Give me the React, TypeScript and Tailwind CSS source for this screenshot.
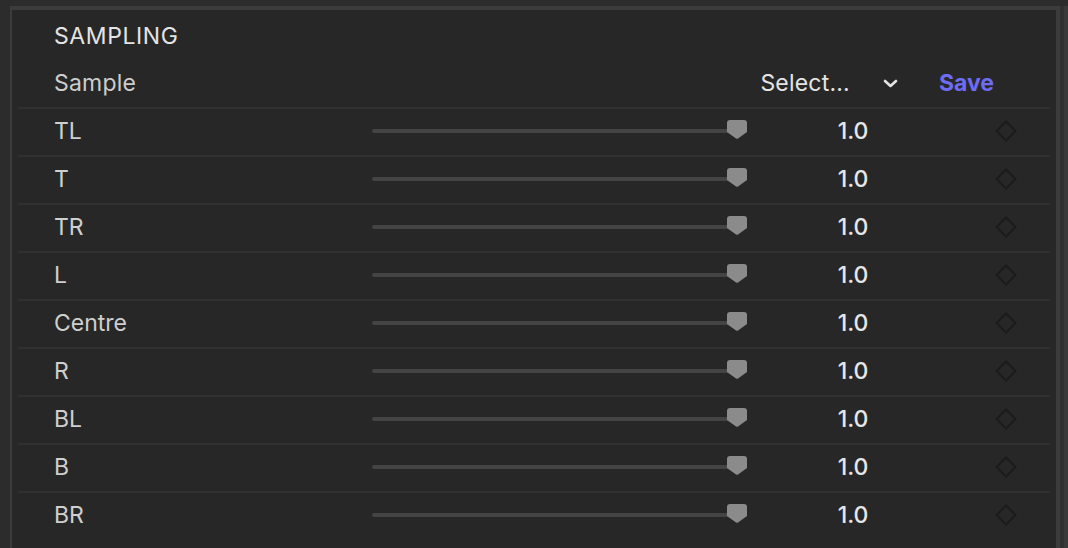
import React from 'react';

const rows = ['TL', 'T', 'TR', 'L', 'Centre', 'R', 'BL', 'B', 'BR'];

function Thumb() {
  return (
    <svg width="20" height="19" viewBox="0 0 20 19" className="block">
      <path d="M3 0 H17 Q20 0 20 3 V12 L11 18.5 Q10 19 9 18.5 L0 12 V3 Q0 0 3 0 Z" fill="#8b8b8b" />
    </svg>
  );
}

function Diamond() {
  return (
    <svg width="22" height="22" viewBox="0 0 22 22" className="block">
      <path d="M11 1.5 L20.5 11 L11 20.5 L1.5 11 Z" fill="none" stroke="#1b1b1b" strokeWidth="2" />
    </svg>
  );
}

function Row({ label }: { label: string }) {
  return (
    <div className="mx-[6px] flex h-[48px] items-center border-t-2 border-[#303030] pb-[2px]">
      <div className="w-[354px] pl-[36px] text-[23px] text-[#cfcfcf]">{label}</div>
      <div className="relative flex h-[20px] w-[375px] items-center">
        <div className="h-[4px] w-[362px] rounded-full bg-[#444444]" />
        <div className="absolute right-0 top-[-1px]">
          <Thumb />
        </div>
      </div>
      <div className="w-[212px] text-center text-[23px] font-medium text-[#e6e6e6]">1.0</div>
      <div className="flex flex-1 justify-center pl-[3px]">
        <Diamond />
      </div>
    </div>
  );
}

export default function App() {
  return (
    <div
      className="flex h-[548px] w-[1068px] overflow-hidden bg-[#2c2c2c] pt-[6px] pl-[10px]"
      style={{ fontFamily: 'Inter, "Noto Sans", sans-serif' }}
    >
      <div className="flex-1 border-l-2 border-t-4 border-r-4 border-[#3c3c3c] bg-[#272727]">
        <div className="flex h-[50px] items-center pl-[42px] pt-[2px] text-[23px] tracking-[0.6px] text-[#e4e4e4]">
          SAMPLING
        </div>
        <div className="flex h-[47px] items-center pl-[42px] pb-[1px]">
          <div className="flex-1 text-[23px] tracking-[0.2px] text-[#cdcdcd]">Sample</div>
          <div className="flex items-center">
            <span className="text-[23px] tracking-[0.2px] text-[#e4e4e4]">Select...</span>
            <svg width="15" height="9" viewBox="0 0 15 9" className="ml-[33px] block">
              <path d="M2 2 L7.5 7 L13 2" fill="none" stroke="#e4e4e4" strokeWidth="2.6" strokeLinecap="round" strokeLinejoin="round" />
            </svg>
          </div>
          <div className="ml-[41px] mr-[62px] text-[23px] font-bold text-[#6d6cf3]">Save</div>
        </div>
        {rows.map((r) => (
          <Row key={r} label={r} />
        ))}
      </div>
      <div className="h-full w-[4px] bg-[#313131]" />
      <div className="h-full w-[4px] bg-[#3a3a3a]" />
    </div>
  );
}
